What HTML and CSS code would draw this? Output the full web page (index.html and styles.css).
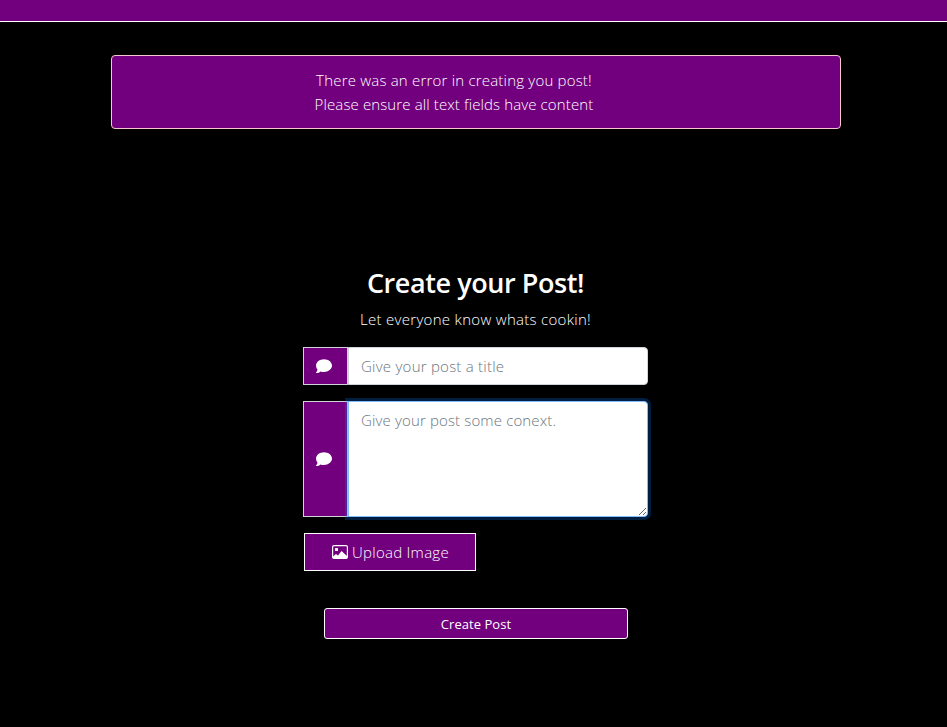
FILE: index.html
```html
<!DOCTYPE html>
<html lang="en">
<head>
<meta charset="utf-8">
<title>Create Post</title>
<link rel="stylesheet" href="styles.css">
</head>
<body>
<header class="navbar"></header>
<div class="alert"><span class="alert-first">There was an error in creating you post!</span><br><span class="alert-second">Please ensure all text fields have content</span></div>
<main class="post">
  <h1>Create your Post!</h1>
  <p>Let everyone know whats cookin!</p>
  <form>
    <div class="input-group">
      <span class="addon"><svg width="16" height="16" viewBox="0 0 16 16" fill="#fff"><path d="M8 1.200c4.400 0 8 2.800 8 6.400S12.400 14 8 14c-1.300 0-2.500-.2-3.500-.6C3.400 14.300 2 15 .3 15c-.3 0-.4-.4-.2-.6C.8 13.600 1.400 12.500 1.500 11.500A5.900 5.900 0 0 1 0 7.600C0 4 3.600 1.200 8 1.200z"/></svg></span>
      <input class="control" type="text" placeholder="Give your post a title">
    </div>
    <div class="input-group">
      <span class="addon"><svg width="16" height="16" viewBox="0 0 16 16" fill="#fff"><path d="M8 1.200c4.400 0 8 2.800 8 6.400S12.400 14 8 14c-1.300 0-2.500-.2-3.500-.6C3.400 14.300 2 15 .3 15c-.3 0-.4-.4-.2-.6C.8 13.600 1.400 12.500 1.500 11.500A5.900 5.900 0 0 1 0 7.600C0 4 3.600 1.200 8 1.200z"/></svg></span>
      <textarea class="control context" placeholder="Give your post some conext."></textarea>
    </div>
    <button class="upload" type="button"><svg width="16" height="14" viewBox="0 0 16 14"><rect x=".6" y=".6" width="14.800" height="12.800" rx="1.400" fill="none" stroke="#fff" stroke-width="1.200"/><rect x="3" y="3" width="3" height="3" rx=".4" fill="#fff"/><path d="M1 13v-1.500L4 9l2 1.500L9.500 6 15 11v2z" fill="#fff"/></svg><span>Upload Image</span></button>
    <button class="create" type="button">Create Post</button>
  </form>
</main>
</body>
</html>
```
FILE: styles.css
```css
* { box-sizing: border-box; }
body {
  margin: 0;
  height: 727px;
  overflow: hidden;
  background: #000;
  color: #fff;
  font: 300 15px/24px "Open Sans", "Noto Sans", sans-serif;
}
.navbar { height: 22px; background: #72007e; border-bottom: 1px solid #fff; }
.alert {
  width: 730px;
  height: 74px;
  margin: 33px 0 0 111px;
  padding: 12px 64px 12px 20px;
  background: #72007e;
  border: 1px solid #f5c6cb;
  border-radius: 4px;
  text-align: center;
}
.alert-first { letter-spacing: .2px; }
.alert-second { letter-spacing: .12px; }
.post { width: 345px; margin: 137px 0 0 303px; text-align: center; }
h1 { margin: 0 0 7px; font-size: 27px; line-height: 34px; font-weight: 600; letter-spacing: -.42px; }
p { margin: 0 0 16px; letter-spacing: .3px; }
form { display: flex; flex-direction: column; }
.input-group { display: flex; margin-bottom: 16px; }
.addon {
  display: flex;
  align-items: center;
  width: 45px;
  padding-left: 12px;
  background: #72007e;
  border: 1px solid #ced4da;
}
.control {
  flex: 1;
  min-width: 0;
  height: 38px;
  margin: 0;
  padding: 6px 12px;
  background: #fff;
  border: 1px solid #ced4da;
  border-radius: 0 4px 4px 0;
  font: inherit;
  letter-spacing: .24px;
  outline: 0;
}
.control::placeholder { color: #6c757d; opacity: 1; }
.context {
  height: 116px;
  resize: vertical;
  letter-spacing: .14px;
  border-color: #80bdff;
  box-shadow: 0 0 0 3px rgba(0, 123, 255, .25);
}
button { font: inherit; color: #fff; background: #72007e; border: 1px solid #fff; }
.upload {
  display: flex;
  align-items: center;
  gap: 4px;
  width: 172px;
  height: 38px;
  margin-left: 1px;
  padding: 0 0 0 27px;
  letter-spacing: .27px;
}
.create {
  width: 304px;
  height: 31px;
  margin: 37px 0 0 21px;
  padding: 1px 0 0;
  border-radius: 3px;
  font-size: 13px;
  font-weight: 400;
  letter-spacing: .05px;
}
```
